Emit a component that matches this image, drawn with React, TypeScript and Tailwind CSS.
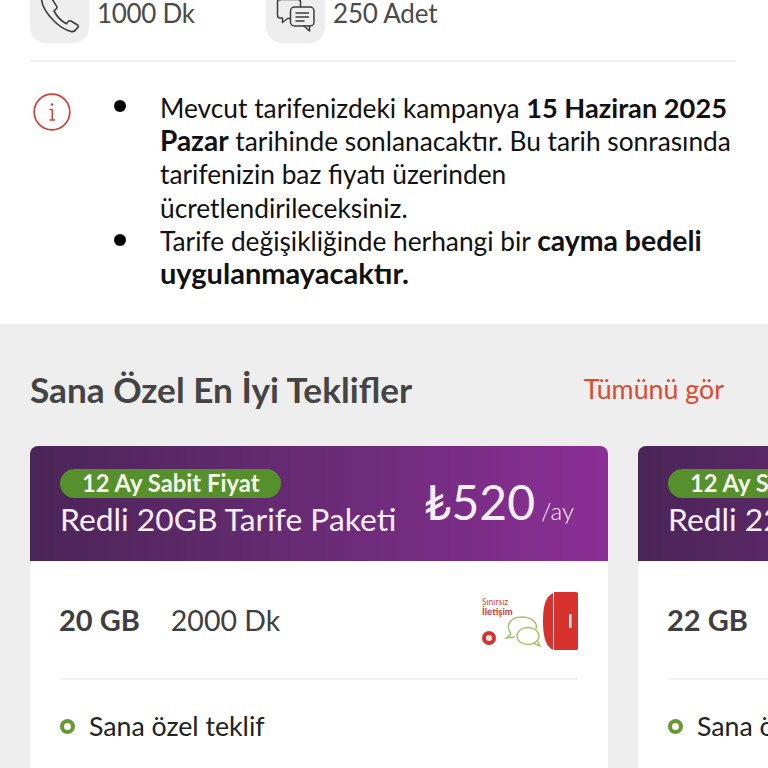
import React from "react";

const font = { fontFamily: '"Lato", "Noto Sans", sans-serif' };

function PhoneIcon() {
  return (
    <svg width="40" height="40" viewBox="0 0 40 40" fill="none" stroke="#3c3c3c" strokeWidth="1.6" strokeLinejoin="round" strokeLinecap="round">
      <path d="M1.5 6 C2 14 8 22 14 28 C19 33 25 37 31 38.5 C33 39 35 38 36 36.5 L38 34.2 C38.6 33.3 38.3 32.5 37.5 32 L31 28 C30 27.5 29.2 27.7 28.6 28.3 L26.3 30.8 C22 28.6 17 23.5 14 18 L16.5 15.5 C17 15 17.2 14 16.7 13.4 L12 6" />
    </svg>
  );
}

function ChatIcon() {
  return (
    <svg width="40" height="40" viewBox="0 0 40 40" fill="none" stroke="#3c3c3c" strokeWidth="1.5" strokeLinejoin="round" strokeLinecap="round">
      <path d="M4 6.5 C2.5 6.5 1.5 7.5 1.5 9 V22 C1.5 24 2.5 25 4 25 H6.5 V29.5 L11.5 25.5 H14" />
      <path d="M4 6.5 H22 C23.5 6.5 24.5 7.5 24.5 9 V13.5" />
      <rect x="14.5" y="14" width="23.5" height="19" rx="4" />
      <path d="M20 20 H32.5 M20 24 H32.5 M20 28 H28" />
      <path d="M28 33 L33.5 38 V33" />
    </svg>
  );
}

function Promo() {
  return (
    <svg width="100" height="62" viewBox="0 0 100 62" fill="none">
      <text x="4" y="14" fontSize="8.5" fill="#d8423e">Sınırsız</text>
      <text x="4" y="24" fontSize="9.5" fontWeight="700" fill="#d8322e">İletişim</text>
      <circle cx="11" cy="47" r="5" stroke="#d8322e" strokeWidth="4" />
      <circle cx="11" cy="47" r="2" fill="#f7dcda" />
      <path d="M33 43 C26 33 34 26 44 26 C53 26 60 31 58 38" stroke="#a5c26a" strokeWidth="1.4" />
      <path d="M33 43 L28 47 L37 46" stroke="#a5c26a" strokeWidth="1.4" />
      <ellipse cx="50" cy="45" rx="11" ry="8.5" fill="#fff" stroke="#a5c26a" strokeWidth="1.4" />
      <path d="M55 52 L62 55 L59 49" stroke="#a5c26a" strokeWidth="1.4" />
      <path d="M75 2 V59 C67 55 65 44 65 30 C65 16 67 6 75 2 Z" fill="#d8322e" />
      <path d="M76 1 H98 C99.5 1 100 2 100 3 V57 C100 58.5 99.5 59 98 59 H76 Z" fill="#d8322e" />
      <rect x="91" y="23" width="2.5" height="14" fill="#f6e6e4" />
    </svg>
  );
}

function OfferCard({ gb, mins, width, promo }: { gb: string; mins?: string; width: string; promo?: boolean }) {
  return (
    <div className={`${width} h-[340px] shrink-0 overflow-hidden rounded-t-lg bg-white`}>
      <div className="flex h-[115px] items-center justify-between bg-gradient-to-r from-[#4a2557] to-[#8b2f96] pl-[30px] pr-[34px]">
        <div className="flex flex-col items-start">
          <span className="-mt-[1px] rounded-full bg-[#56902c] px-[22px] text-[23.8px] font-bold leading-[29px] whitespace-nowrap text-[#f4fbe9]">
            12 Ay Sabit Fiyat
          </span>
          <span className="mt-[2px] text-[31.8px] leading-[38px] whitespace-nowrap text-[#fbeefc]">Redli {gb} Tarife Paketi</span>
        </div>
        <div className="flex items-baseline text-[#fbeefc]">
          <span className="text-[48px] leading-none">₺520</span>
          <span className="ml-[6px] text-[24px] font-light">/ay</span>
        </div>
      </div>
      <div className="mx-[30px] flex h-[119px] items-center justify-between border-b-2 border-[#f1f1f1]">
        <div className="-ml-[1px] flex items-baseline gap-[31px] text-[#3e3e3e]">
          <span className="text-[29px] font-bold">{gb.replace("GB", " GB")}</span>
          <span className="text-[28.5px]">{mins}</span>
        </div>
        {promo && <div className="mt-1"><Promo /></div>}
      </div>
      <div className="flex items-center gap-[14px] px-[30px] pt-[29px] text-[#222]">
        <span className="h-[15px] w-[15px] rounded-full border-[4px] border-[#659a32] bg-white" />
        <span className="text-[26.7px] leading-[34px] whitespace-nowrap">Sana özel teklif</span>
      </div>
    </div>
  );
}

export default function App() {
  return (
    <div className="h-[768px] w-[768px] overflow-hidden bg-white" style={font}>
      {/* Allowance chips, scrolled partly out of view */}
      <div className="-mt-[17px] ml-[30px] mr-[32px] flex h-[79px] border-b-2 border-[#f2f2f2] pb-[18px]">
        <div className="flex w-[236px] items-center gap-[8px]">
          <div className="flex h-[60px] w-[59px] items-center justify-center rounded-b-2xl bg-[#eeeeee]">
            <PhoneIcon />
          </div>
          <span className="pt-[2px] text-[26px] tracking-[-0.3px] text-[#4a4a4a]">1000 Dk</span>
        </div>
        <div className="flex items-center gap-[8px]">
          <div className="flex h-[60px] w-[59px] items-center justify-center rounded-b-2xl bg-[#eeeeee]">
            <ChatIcon />
          </div>
          <span className="pt-[2px] text-[26px] tracking-[-0.2px] text-[#4a4a4a]">250 Adet</span>
        </div>
      </div>

      {/* Campaign notice */}
      <div className="flex h-[262px] px-[33px] pt-[30px]">
        <svg width="38" height="38" viewBox="0 0 38 38" className="mt-[1px] shrink-0" fill="none" stroke="#d6403a" strokeWidth="1.7">
          <circle cx="19" cy="19" r="17.8" />
          <circle cx="19" cy="11.5" r="1.3" fill="#d6403a" stroke="none" />
          <path d="M16.5 16.5 H19.3 V27 M16.5 27 H22" strokeWidth="1.6" />
        </svg>
        <ul className="ml-[89px] w-[575px] text-[26.3px] leading-[33.2px] text-[#111]">
          <li className="relative">
            <span className="absolute -left-[46px] top-[8px] h-3 w-3 rounded-full bg-black" />
            Mevcut tarifenizdeki kampanya <b className="text-[27.2px] leading-none">15 Haziran 2025</b>{" "}
            <b className="text-[28px] leading-none">Pazar</b> tarihinde sonlanacaktır. Bu tarih sonrasında tarifenizin baz fiyatı üzerinden ücretlendirileceksiniz.
          </li>
          <li className="relative">
            <span className="absolute -left-[46px] top-[9px] h-3 w-3 rounded-full bg-black" />
            Tarife değişikliğinde herhangi bir <b className="text-[28.4px] leading-none">cayma bedeli</b>{" "}
            <b className="text-[29px] leading-none">uygulanmayacaktır.</b>
          </li>
        </ul>
      </div>

      {/* Offers */}
      <div className="h-[444px] bg-[#eeeeee] pt-[45px]">
        <div className="flex items-center justify-between pl-[30px] pr-[44px]">
          <h2 className="text-[35.2px] leading-10 font-bold text-[#444]">Sana Özel En İyi Teklifler</h2>
          <span className="text-[26.8px] text-[#dd4a30]">Tümünü gör</span>
        </div>
        <div className="mt-[37px] flex gap-[30px] pl-[30px]">
          <OfferCard gb="20GB" mins="2000 Dk" width="w-[578px]" promo />
          <OfferCard gb="22GB" width="w-[578px]" />
        </div>
      </div>
    </div>
  );
}
